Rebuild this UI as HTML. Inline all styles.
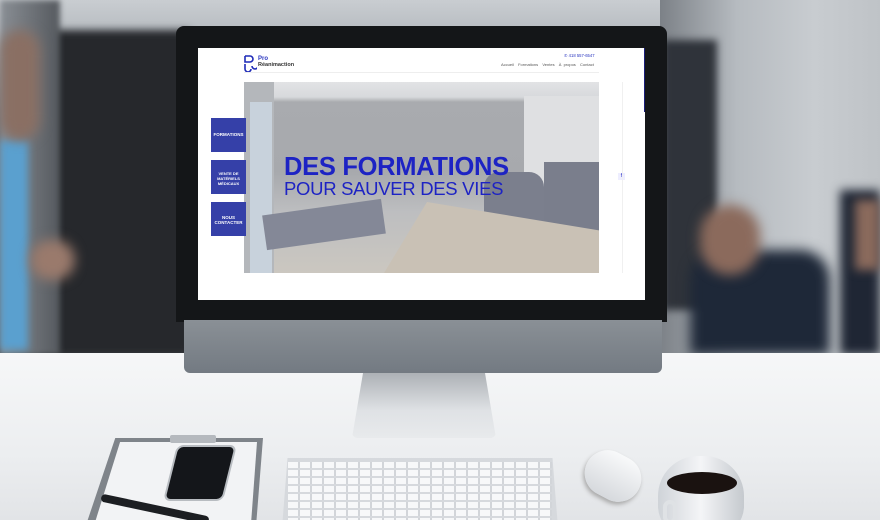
<!DOCTYPE html>
<html><head><meta charset="utf-8"><style>
*{margin:0;padding:0;box-sizing:border-box}
html,body{width:880px;height:520px;overflow:hidden}
body{position:relative;background:#e9ebee;font-family:"Liberation Sans",sans-serif}
.a{position:absolute}
</style></head><body>
<!-- background office -->
<div class="a" style="left:0;top:0;width:880px;height:355px;background:linear-gradient(180deg,#c9cdd1 0,#b3b8bd 40px,#6b7076 120px,#4a4d52 355px)"></div>
<div class="a" style="left:40px;top:30px;width:150px;height:325px;background:#26282c;filter:blur(4px)"></div>
<div class="a" style="left:0;top:0;width:60px;height:355px;background:linear-gradient(90deg,#8a8f95,#55595e);filter:blur(3px)"></div>
<div class="a" style="left:0;top:140px;width:28px;height:210px;background:#5aa0cf;filter:blur(4px)"></div>
<div class="a" style="left:0;top:30px;width:40px;height:110px;background:#8a6f63;filter:blur(6px);border-radius:20px"></div>
<div class="a" style="left:30px;top:240px;width:45px;height:40px;background:#9a7a6c;filter:blur(6px);border-radius:20px"></div>
<div class="a" style="left:660px;top:0;width:220px;height:355px;background:linear-gradient(90deg,#7c8187,#b6bbc0 35%,#c8ccd0 70%,#bfc3c7)"></div>
<div class="a" style="left:662px;top:40px;width:55px;height:270px;background:#2f333a;filter:blur(4px)"></div>
<div class="a" style="left:690px;top:250px;width:140px;height:105px;background:#1e2838;filter:blur(6px);border-radius:30px 30px 0 0"></div>
<div class="a" style="left:700px;top:205px;width:60px;height:70px;background:#8b6a5c;filter:blur(6px);border-radius:30px"></div>
<div class="a" style="left:840px;top:190px;width:40px;height:165px;background:#1f2634;filter:blur(5px)"></div>
<div class="a" style="left:855px;top:200px;width:25px;height:70px;background:#8a6a5c;filter:blur(5px)"></div>
<!-- desk -->
<div class="a" style="left:0;top:353px;width:880px;height:167px;background:linear-gradient(180deg,#f6f7f8,#eceef0 60%,#e2e4e7)"></div>
<!-- stand -->
<div class="a" style="left:352px;top:370px;width:144px;height:68px;background:linear-gradient(180deg,#a9adb2,#dfe2e5 60%,#e8eaec);clip-path:polygon(8% 0,92% 0,100% 100%,0 100%);border-radius:0 0 6px 6px"></div>
<!-- monitor -->
<div class="a" style="left:176px;top:26px;width:491px;height:296px;background:#141618;border-radius:8px 8px 0 0"></div>
<div class="a" style="left:184px;top:320px;width:478px;height:53px;background:linear-gradient(180deg,#8a9096,#737a82);border-radius:0 0 6px 6px"></div>
<!-- screen -->
<div class="a" style="left:198px;top:48px;width:447px;height:252px;background:#fff;overflow:hidden">
  <div class="a" style="left:446px;top:0;width:1px;height:64px;background:#1a1d7a"></div>
  <svg class="a" style="left:45px;top:7px" width="14" height="18" viewBox="0 0 14 18"><path d="M2 1h5a3 3 0 010 6H2V1M2 9v5a3 3 0 006 0M9 11a3 3 0 106 0" fill="none" stroke="#1f2bb8" stroke-width="1.6"/></svg>
  <div class="a" style="left:60px;top:8px;font-size:6px;color:#2a36c0;font-weight:bold;line-height:6px">Pro</div>
  <div class="a" style="left:60px;top:14px;font-size:5.5px;color:#333;font-weight:bold">Réanimaction</div>
  <div class="a" style="left:366px;top:5px;font-size:4.2px;color:#2a36c0">✆ 418 557-6547</div>
  <div class="a" style="left:303px;top:14px;font-size:4px;color:#555;word-spacing:1px">Accueil&nbsp; Formations&nbsp; Ventes&nbsp; À propos&nbsp; Contact</div>
  <div class="a" style="left:46px;top:24px;width:355px;height:1px;background:#eee"></div>
  <div class="a" style="left:46px;top:34px;width:355px;height:191px;background:linear-gradient(180deg,#e2e3e5 0,#d7d9dc 15px,#a9abaf 20px,#a7a9ad 90px,#bdbec0 130px,#cbc7c0 191px);overflow:hidden">
    <div class="a" style="left:0;top:0;width:30px;height:191px;background:#b4b7bb"></div>
    <div class="a" style="left:6px;top:20px;width:22px;height:171px;background:#c8d2dc"></div>
    <div class="a" style="left:280px;top:14px;width:75px;height:140px;background:#dfe0e2"></div>
    <div class="a" style="left:300px;top:80px;width:55px;height:90px;background:#7a7e8c"></div>
    <div class="a" style="left:240px;top:90px;width:60px;height:50px;background:#7b7f8d;border-radius:15px 15px 0 0"></div>
    <div class="a" style="left:140px;top:120px;width:215px;height:71px;background:#c9c1b5;clip-path:polygon(20% 0,100% 40%,100% 100%,0 100%)"></div>
    <div class="a" style="left:20px;top:125px;width:120px;height:35px;background:#848897;transform:rotate(-8deg)"></div>
  </div>
  <div class="a" style="left:86px;top:106px;font-size:25.5px;font-weight:bold;color:#1d23c4;letter-spacing:-0.3px;line-height:26px">DES FORMATIONS</div>
  <div class="a" style="left:86px;top:131px;font-size:18.5px;color:#1d23c4;line-height:20px;letter-spacing:-0.3px">POUR SAUVER DES VIES</div>
  <div class="a" style="left:13px;top:70px;width:35px;height:34px;background:#3540a8;color:#fff;font-size:4.5px;text-align:center;padding-top:14px;font-weight:bold">FORMATIONS</div>
  <div class="a" style="left:13px;top:112px;width:35px;height:34px;background:#3540a8;color:#fff;font-size:4px;text-align:center;padding-top:11px;font-weight:bold;line-height:5px">VENTE DE<br>MATÉRIELS<br>MÉDICAUX</div>
  <div class="a" style="left:13px;top:154px;width:35px;height:34px;background:#3540a8;color:#fff;font-size:4.5px;text-align:center;padding-top:13px;font-weight:bold;line-height:5px">NOUS<br>CONTACTER</div>
  <div class="a" style="left:420px;top:125px;width:7px;height:7px;background:#eef;color:#1d23c4;font-size:5px;text-align:center">f</div>
  <div class="a" style="left:424px;top:34px;width:1px;height:191px;background:#f0f0f0"></div>
</div>
<!-- clipboard -->
<div class="a" style="left:85px;top:438px;width:178px;height:90px;background:#7f848a;clip-path:polygon(17% 0,100% 0,96% 100%,0 100%)"></div>
<div class="a" style="left:92px;top:442px;width:165px;height:90px;background:#f2f3f5;clip-path:polygon(17% 0,100% 0,96% 100%,0 100%)"></div>
<div class="a" style="left:170px;top:435px;width:46px;height:8px;background:#b5b9be;border-radius:2px"></div>
<div class="a" style="left:170px;top:445px;width:60px;height:56px;background:#14161a;border:2px solid #b8bcc1;border-radius:7px;transform:skewX(-14deg)"></div>
<div class="a" style="left:100px;top:505px;width:110px;height:8px;background:#1c1e22;border-radius:4px;transform:rotate(12deg)"></div>
<!-- keyboard -->
<div class="a" style="left:282px;top:458px;width:276px;height:70px;background:#d6d9dd;border-radius:3px;clip-path:polygon(2% 0,98% 0,100% 100%,0 100%)"></div>
<div class="a" style="left:288px;top:462px;width:264px;height:58px;background:repeating-linear-gradient(90deg,#f7f8f9 0,#f7f8f9 10px,#d2d5d9 10px,#d2d5d9 12px);-webkit-mask:repeating-linear-gradient(180deg,#000 0,#000 6px,transparent 6px,transparent 8px)"></div>
<div class="a" style="left:584px;top:453px;width:58px;height:46px;background:linear-gradient(180deg,#f8f9fa,#d6d9dd);border-radius:25px;transform:rotate(28deg);box-shadow:0 3px 4px #aaa"></div>
<div class="a" style="left:658px;top:456px;width:86px;height:80px;background:linear-gradient(90deg,#cfd3d8,#f4f5f7 50%,#c5c9ce);border-radius:40px 40px 30px 30px"></div>
<div class="a" style="left:667px;top:472px;width:70px;height:22px;background:#1a1210;border-radius:50%"></div>
<div class="a" style="left:663px;top:500px;width:14px;height:24px;border:4px solid #dfe2e5;border-radius:8px"></div>
</body></html>
